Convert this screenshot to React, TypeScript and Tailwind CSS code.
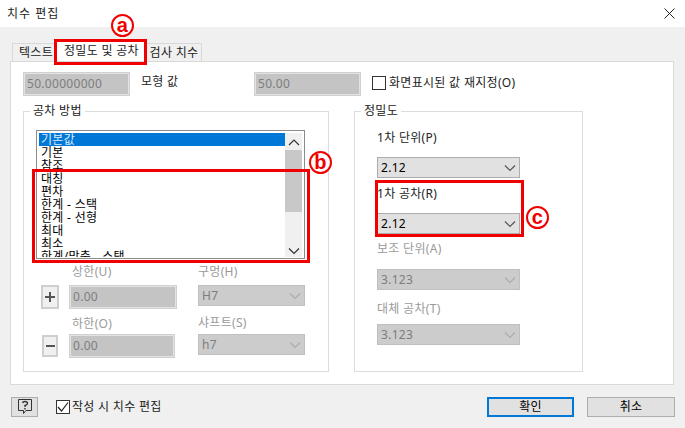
import { ReactNode } from "react";

const listItems = ["기본", "참조", "대칭", "편차", "한계 - 스택", "한계 - 선형", "최대", "최소", "한계/맞춤 - 스택"];

// Small chevron used by the combo boxes and the scrollbar
const Chevron = ({ up, color }: { up?: boolean; color: string }) => (
  <svg width="14" height="8" viewBox="0 0 14 8" fill="none" stroke={color} strokeWidth="1.2">
    <path d={up ? "M2 7 L7 2 L12 7" : "M2 1.5 L7 6.5 L12 1.5"} />
  </svg>
);

const TextBox = ({ value, className }: { value: string; className: string }) => (
  <div className={`border-2 border-[#e3e3e3] outline outline-1 -outline-offset-1 outline-[#d0d0d0] bg-[#c4c4c4] text-[#7d7d7d] pl-[2px] flex items-center ${className}`}>
    {value}
  </div>
);

const Combo = ({ value, enabled, className }: { value: string; enabled?: boolean; className: string }) => (
  <div
    className={`flex items-center justify-between pl-[3px] pr-[2px] border h-[21px] ${className} ${
      enabled ? "bg-[#e1e1e1] border-[#adadad] text-black" : "bg-[#cccccc] border-[#bfbfbf] text-[#7d7d7d]"
    }`}
  >
    <span>{value}</span>
    <Chevron color={enabled ? "#555555" : "#adadad"} />
  </div>
);

const Label = ({ children, disabled, className }: { children: ReactNode; disabled?: boolean; className?: string }) => (
  <div className={`h-[16px] leading-[16px] whitespace-nowrap ${disabled ? "text-[#9a9a9a]" : "text-[#222222]"} ${className ?? ""}`}>
    {children}
  </div>
);

const Group = ({ title, className, children }: { title: string; className: string; children: ReactNode }) => (
  <div className={`relative border border-[#dcdcdc] h-[261px] ${className}`}>
    <span className="absolute -top-[9px] left-[6px] bg-white px-[3px] leading-[16px] text-[#222222]">{title}</span>
    {children}
  </div>
);

const Check = ({ checked }: { checked?: boolean }) => (
  <div className="w-[14px] h-[14px] border border-[#333333] bg-white shrink-0 flex items-center justify-center">
    {checked && (
      <svg width="12" height="12" viewBox="0 0 12 12" fill="none" stroke="#222222" strokeWidth="1.2">
        <path d="M1 6 L4.5 10 L11 1.5" />
      </svg>
    )}
  </div>
);

// Red callout letters and boxes drawn over the dialog
const Badge = ({ letter, className }: { letter: string; className: string }) => (
  <div
    className={`absolute w-[23px] h-[23px] rounded-full border-[2px] border-[#f00000] bg-white text-[#f00000] font-bold text-[20px] leading-[17px] flex items-center justify-center font-['Liberation_Sans',sans-serif] ${className}`}
  >
    {letter}
  </div>
);

export default function App() {
  return (
    <div className="relative w-[685px] h-[428px] overflow-hidden bg-[#f0f0f0] text-[12px] tracking-[0.3px] font-['Noto_Sans','Noto_Sans_CJK_KR',sans-serif]">
      {/* title bar */}
      <div className="h-[27px] bg-white flex items-center justify-between pl-[7px] pr-[10px]">
        <span className="text-[12px] tracking-[1px] text-[#222222]">치수 편집</span>
        <svg width="11" height="11" viewBox="0 0 11 11" stroke="#222222" strokeWidth="1" className="mb-[1px]">
          <path d="M0.5 0.5 L10.5 10.5 M10.5 0.5 L0.5 10.5" />
        </svg>
      </div>

      {/* tabs */}
      <div className="h-[34px] pl-[12px] flex items-end">
        <div className="w-[43px] h-[18px] pl-[6px] border border-b-0 border-[#d9d9d9] bg-[#f0f0f0] leading-[18px] text-[#222222] whitespace-nowrap">텍스트</div>
        <div className="w-[92px] h-[20px] pl-[9px] bg-white leading-[19px] text-[#222222] whitespace-nowrap">정밀도 및 공차</div>
        <div className="w-[55px] h-[18px] border border-b-0 border-l-0 border-[#d9d9d9] bg-[#f0f0f0] text-center leading-[18px] text-[#222222] whitespace-nowrap">검사 치수</div>
      </div>

      {/* tab page */}
      <div className="ml-[10px] w-[664px] h-[324px] border border-[#d9d9d9] bg-white pl-[12px] pt-[10px]">
        <div className="flex items-start">
          <TextBox value="50.00000000" className="w-[107px] h-[24px]" />
          <Label className="ml-[11px] mt-[2px] w-[42px]">모형 값</Label>
          <TextBox value="50.00" className="ml-[71px] w-[107px] h-[24px]" />
          <div className="ml-[11px] mt-[3px] flex items-center gap-[3px]">
            <Check />
            <Label>화면표시된 값 재지정(O)</Label>
          </div>
        </div>

        <div className="flex mt-[15px] gap-[25px]">
          <Group title="공차 방법" className="w-[306px] pl-[12px] pt-[18px]">
            {/* list box */}
            <div className="w-[269px] h-[129px] border border-[#8c8c8c] p-[2px] flex overflow-hidden">
              <div className="w-[248px] h-[124px] overflow-hidden leading-[13px] text-black">
                <div className="h-[13px] bg-[#0078d7] text-[#dfe9ff] pl-[2px]">기본값</div>
                {listItems.map((item) => (
                  <div key={item} className="h-[13px] pl-[2px] whitespace-nowrap">{item}</div>
                ))}
              </div>
              <div className="w-[17px] h-[124px] bg-[#f0f0f0] flex flex-col items-center">
                <div className="h-[17px] w-full bg-[#f0f0f0] flex items-center justify-center">
                  <Chevron up color="#333333" />
                </div>
                <div className="h-[62px] w-full bg-[#c8c8c8]" />
                <div className="h-[33px]" />
                <div className="h-[12px] w-full flex items-center justify-center">
                  <Chevron color="#333333" />
                </div>
              </div>
            </div>

            {/* limits */}
            <div className="flex mt-[5px]">
              <div className="w-[162px]">
                <Label disabled className="ml-[36px]">상한(U)</Label>
                <div className="flex items-center mt-[5px] ml-[5px]">
                  <div className="w-[18px] h-[24px] bg-[#f0f0f0] border-2 border-[#cfcfcf] flex items-center justify-center">
                    <svg width="10" height="10" viewBox="0 0 10 10" stroke="#555555" strokeWidth="2">
                      <path d="M0 5 H10 M5 0 V10" />
                    </svg>
                  </div>
                  <TextBox value="0.00" className="ml-[10px] w-[108px] h-[24px]" />
                </div>
                <Label disabled className="ml-[36px] mt-[7px]">하한(O)</Label>
                <div className="flex items-center mt-[2px] ml-[6px]">
                  <div className="w-[16px] h-[22px] bg-[#f0f0f0] border-2 border-[#cfcfcf] flex items-center justify-center">
                    <svg width="9" height="2" viewBox="0 0 9 2" stroke="#555555" strokeWidth="2">
                      <path d="M0 1 H9" />
                    </svg>
                  </div>
                  <TextBox value="0.00" className="ml-[11px] w-[106px] h-[24px]" />
                </div>
              </div>
              <div className="w-[107px]">
                <Label disabled>구멍(H)</Label>
                <Combo value="H7" className="w-[107px] mt-[5px]" />
                <Label disabled className="mt-[9px]">샤프트(S)</Label>
                <Combo value="h7" className="w-[107px] mt-[3px]" />
              </div>
            </div>
          </Group>

          <Group title="정밀도" className="w-[229px] pl-[22px] pt-[18px]">
            <Label>1차 단위(P)</Label>
            <Combo enabled value="2.12" className="w-[143px] mt-[11px]" />
            <Label className="mt-[8px]">1차 공차(R)</Label>
            <Combo enabled value="2.12" className="w-[143px] mt-[11px]" />
            <Label disabled className="mt-[7px]">보조 단위(A)</Label>
            <Combo value="3.123" className="w-[143px] mt-[12px]" />
            <Label disabled className="mt-[11px]">대체 공차(T)</Label>
            <Combo value="3.123" className="w-[143px] mt-[7px]" />
          </Group>
        </div>
      </div>

      {/* footer */}
      <div className="flex items-center pl-[11px] mt-[11px] h-[21px]">
        <div className="w-[27px] h-[20px] bg-[#e1e1e1] border border-[#adadad] flex items-center justify-center">
          <svg width="16" height="18" viewBox="0 0 16 18" fill="none" stroke="#333333" strokeWidth="1" className="mt-[1px]">
            <path d="M1.5 1.5 H14.5 V12.5 H9 L6.5 15.5 V12.5 H1.5 Z" />
            <path d="M5.5 5 Q6 3.5 8 3.5 Q10.5 3.5 10.5 5.5 Q10.5 6.8 8 7.5 V9 M8 10 V11.5" strokeWidth="1.4" />
          </svg>
        </div>
        <div className="ml-[18px]"><Check checked /></div>
        <Label className="ml-[2px] w-[89px]">작성 시 치수 편집</Label>
        <div className="ml-[326px] w-[87px] h-[20px] border-2 border-[#0078d7] bg-[#e1e1e1] flex items-center justify-center text-black">확인</div>
        <div className="ml-[13px] w-[88px] h-[20px] border border-[#adadad] bg-[#e1e1e1] flex items-center justify-center text-black">취소</div>
      </div>

      {/* annotations */}
      <div className="absolute left-[54px] top-[39px] w-[93px] h-[26px] border-[3px] border-[#f00000]" />
      <div className="absolute left-[32px] top-[169px] w-[278px] h-[94px] border-[3px] border-[#f00000]" />
      <div className="absolute left-[375px] top-[180px] w-[149px] h-[57px] border-[3px] border-[#f00000]" />
      <Badge letter="a" className="left-[111px] top-[14px]" />
      <Badge letter="b" className="left-[309px] top-[151px]" />
      <Badge letter="c" className="left-[526px] top-[206px]" />
    </div>
  );
}
